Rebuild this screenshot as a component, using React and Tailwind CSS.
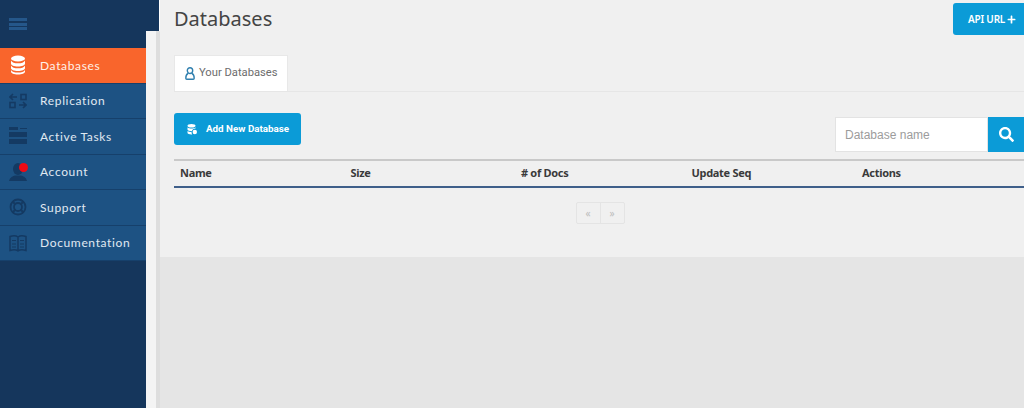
import { FaSearch, FaPlus } from "react-icons/fa";

const DbIcon = () => (
    <svg width="18" height="20" viewBox="0 0 18 20" fill="currentColor">
        <ellipse cx="9" cy="3.5" rx="7" ry="3" />
        <path d="M2 5.5c1 2 3.500 2.800 7 2.800s6-.8 7-2.800v3c0 1.800-3 3-7 3s-7-1.200-7-3z" />
        <path d="M2 10.500c1 2 3.500 2.800 7 2.800s6-.8 7-2.800v2.500c0 1.800-3 3-7 3s-7-1.200-7-3z" />
        <path d="M2 15c1 2 3.500 2.600 7 2.600s6-.6 7-2.600v1.500c0 1.800-3 3-7 3s-7-1.200-7-3z" />
    </svg>
);

const ReplicationIcon = () => (
    <svg width="18" height="16" viewBox="0 0 18 16" fill="none" stroke="currentColor" strokeWidth="1.6">
        <path d="M1 4h7M4 1L1 4l3 3" />
        <rect x="12" y="1.500" width="5" height="5" />
        <rect x="1" y="9.500" width="5" height="5" />
        <path d="M10 12h7M14 9l3 3-3 3" />
    </svg>
);

const TasksIcon = () => (
    <svg width="18" height="18" viewBox="0 0 18 18" fill="currentColor">
        <rect x="0" y="0" width="9" height="3" />
        <rect x="11" y="1" width="7" height="1" />
        <rect x="0" y="5" width="18" height="5" />
        <rect x="0" y="12" width="18" height="5" />
    </svg>
);

const AccountIcon = () => (
    <div className="relative w-[18px] h-[18px]">
        <svg width="18" height="18" viewBox="0 0 18 18" fill="currentColor">
            <ellipse cx="9" cy="6" rx="5" ry="6" />
            <path d="M0 18c1-4 4-5 6-5.500h6c2 .5 5 1.500 6 5.500z" />
        </svg>
        <span className="absolute top-0 left-[10px] w-[9px] h-[9px] rounded-full bg-[#ee0a14]" />
    </div>
);

const SupportIcon = () => (
    <svg width="18" height="18" viewBox="0 0 18 18" fill="none" stroke="currentColor">
        <circle cx="9" cy="9" r="7.500" strokeWidth="1.800" />
        <circle cx="9" cy="9" r="4" strokeWidth="1.800" />
        <path d="M3.500 3.500l3 3M14.500 3.500l-3 3M3.500 14.500l3-3M14.500 14.500l-3-3" strokeWidth="2" />
    </svg>
);

const BookIcon = () => (
    <svg width="18" height="18" viewBox="0 0 18 18" fill="none" stroke="currentColor" strokeWidth="1.500">
        <path d="M1 2.500c3-1 6-1 8 .5 2-1.500 5-1.500 8-.5v14c-3-1-6-1-8 .5-2-1.500-5-1.500-8-.5zM9 3v14" />
        <path d="M3 6.500h4M3 10h4M11 6.500h4M11 10h4M3 13h4M11 13h4" strokeWidth="1.200" />
    </svg>
);

const TabUserIcon = () => (
    <svg width="10" height="13" viewBox="0 0 10 13" fill="none" stroke="#2f7fae" strokeWidth="1.400">
        <ellipse cx="5" cy="3.600" rx="2.700" ry="2.900" />
        <path d="M3 6.500C1.500 7.200.8 8.800.8 11.200c0 .7.400 1 1 1h6.400c.6 0 1-.3 1-1C9.200 8.800 8.500 7.200 7 6.500" />
    </svg>
);

const AddDbIcon = () => (
    <svg width="10" height="11" viewBox="0 0 10 11" fill="white">
        <ellipse cx="4.500" cy="1.800" rx="4" ry="1.800" />
        <path d="M.5 3.200c1 1 2.500 1.300 4 1.300s3-.3 4-1.300v1.300c-2 .2-3.200 1.200-3.700 2.800-2 0-4.300-.5-4.300-1.700z" />
        <path d="M.5 7c1 .8 2.500 1 4 1 0 .9.200 1.700.7 2.400H4.500C2.300 10.400.5 9.800.5 9z" />
        <circle cx="7.800" cy="8" r="2.200" />
    </svg>
);

const navItems = [
    { label: "Databases", icon: <DbIcon />, active: true },
    { label: "Replication", icon: <ReplicationIcon /> },
    { label: "Active Tasks", icon: <TasksIcon /> },
    { label: "Account", icon: <AccountIcon /> },
    { label: "Support", icon: <SupportIcon /> },
    { label: "Documentation", icon: <BookIcon /> },
];

const columns = ["Name", "Size", "# of Docs", "Update Seq", "Actions"];

const Sidebar = () => (
    <div className="flex w-[160px] shrink-0 h-full">
        <div className="w-[146px] h-full bg-[#15365c] pt-[18px]">
            <div className="ml-[9px] w-[18px] h-[12px] flex flex-col justify-between">
                <span className="h-[3px] bg-[#25578a]" />
                <span className="h-[3px] bg-[#25578a]" />
                <span className="h-[3px] bg-[#25578a]" />
            </div>
            <div className="mt-[18px]">
                {navItems.map((item) => (
                    <div
                        key={item.label}
                        className={`h-[35.5px] flex items-center border-b border-[#16406b] ${item.active ? "bg-[#f9652c] text-[#fff1e8]" : "bg-[#1d5283] text-[#e0e9f2]"}`}
                    >
                        <span className={`w-[40px] pl-[9px] ${item.active ? "text-white" : "text-[#143a63]"}`}>
                            {item.icon}
                        </span>
                        <span className="text-[12px] tracking-[0.65px] pt-[1px] font-['Lato',sans-serif]">{item.label}</span>
                    </div>
                ))}
            </div>
        </div>
        <div className="w-[14px] h-full flex flex-col">
            <div className="h-[31px] w-[13px] bg-[#15365c]" />
            <div className="flex-1 bg-[#f4f4f4] border-r-[4px] border-[#dedede]" />
        </div>
    </div>
);

const Main = () => (
    <div className="flex-1 min-w-0 h-full flex flex-col bg-[#e5e5e5]">
        <div className="h-[257px] bg-[#f0f0f0] pl-[14px]">
            <div className="flex justify-between items-start h-[55px]">
                <h1 className="text-[20px] leading-[38px] text-[#444444]">Databases</h1>
                <div className="mt-[3px] w-[71px] h-[32px] rounded-l-[3px] bg-[#0b9bd7] flex items-center pl-[15px] gap-[2px] text-white text-[10px] font-semibold tracking-[-0.2px]">
                    API URL <FaPlus className="text-[9px]" />
                </div>
            </div>
            <div className="h-[37px] border-b border-[#e6e6e6]">
                <div className="w-[114px] h-[36px] bg-white flex items-center pl-[10px] gap-[4px] border border-b-0 border-[#e8e8e8] whitespace-nowrap">
                    <TabUserIcon />
                    <span className="text-[11.200px] text-[#6d6d6d] font-['Roboto',sans-serif]">Your Databases</span>
                </div>
            </div>
            <div className="flex justify-between items-start h-[67px]">
                <div className="mt-[21px] w-[127px] h-[32px] rounded-[3px] bg-[#0b9bd7] flex items-center pl-[13px] gap-[9px] text-white text-[9.800px] font-bold whitespace-nowrap font-['Roboto',sans-serif]">
                    <AddDbIcon />
                    Add New Database
                </div>
                <div className="mt-[25px] flex h-[35px]">
                    <div className="w-[153px] bg-white border border-[#e3e3e3] flex items-center pl-[9px] text-[12px] text-[#9c9c9c] font-['Liberation_Sans',sans-serif]">
                        Database name
                    </div>
                    <div className="w-[36px] bg-[#0b9bd7] flex items-center justify-center text-white">
                        <FaSearch className="text-[15px]" />
                    </div>
                </div>
            </div>
            <div className="h-[29px] border-t-2 border-t-[#c9c9c9] border-b-2 border-b-[#3f5f8a] grid grid-cols-[170.500px_170.500px_170.500px_170.500px_1fr] items-center pl-[6px]">
                {columns.map((col) => (
                    <span key={col} className="text-[11px] font-bold text-[#3a3a3a] tracking-[-0.3px]">{col}</span>
                ))}
            </div>
            <div className="mt-[14px] flex justify-center">
                <div className="flex w-[49px] h-[22px] border border-[#e4e4e4] rounded-[2px] text-[#bdbdbd] text-[10px] ml-[2px]">
                    <span className="flex-1 flex items-center justify-center border-r border-[#e4e4e4]">«</span>
                    <span className="flex-1 flex items-center justify-center">»</span>
                </div>
            </div>
        </div>
    </div>
);

export default function App() {
    return (
        <div className="flex w-[1024px] h-[408px] overflow-hidden font-['Noto_Sans',sans-serif]">
            <Sidebar />
            <Main />
        </div>
    );
}
